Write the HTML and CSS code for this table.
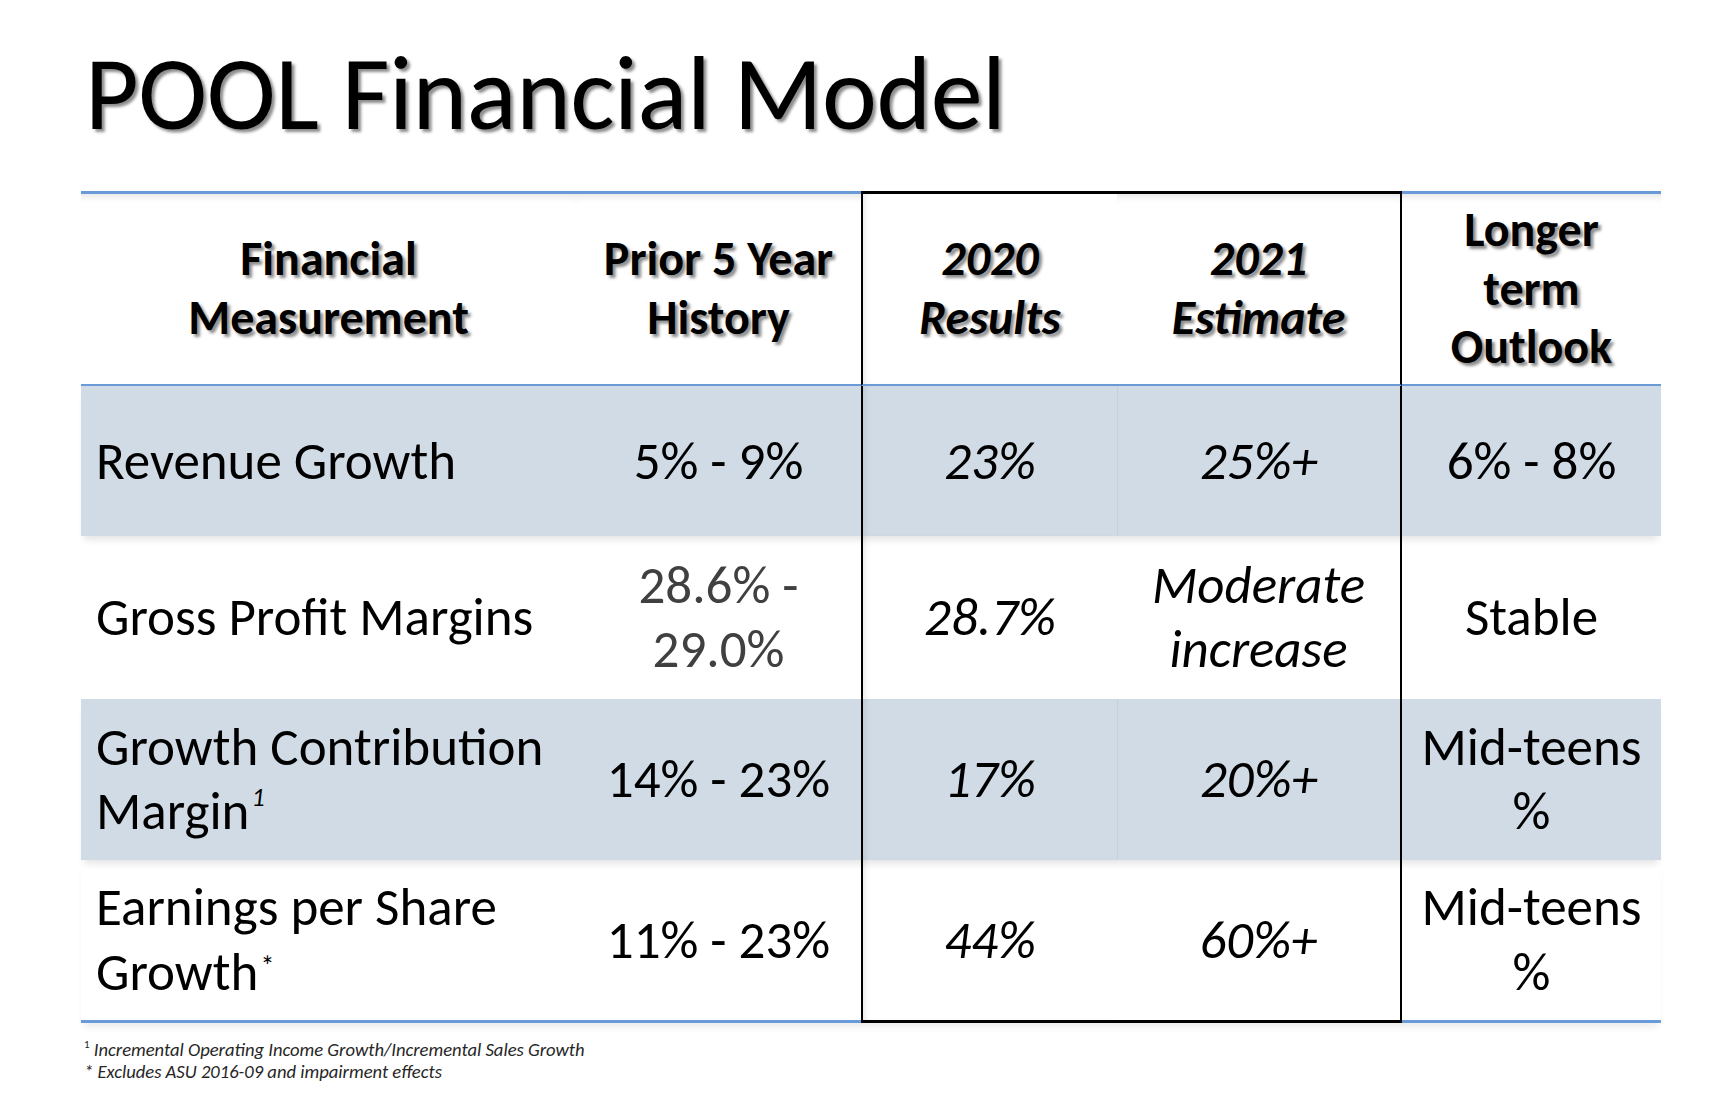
FILE: index.html
```html
<!DOCTYPE html>
<html lang="en">
<head>
<meta charset="utf-8">
<title>POOL Financial Model</title>
<link rel="stylesheet" href="styles.css">
</head>
<body>
<div class="slide">
  <h1 class="title">POOL Financial Model</h1>
  <div class="table">
    <div class="row head">
      <div class="cell hd"><span>Financial<br>Measurement</span></div>
      <div class="cell hd"><span>Prior 5 Year<br>History</span></div>
      <div class="cell hd box-l box-t it"><span>2020<br>Results</span></div>
      <div class="cell hd box-r box-t it"><span>2021<br>Estimate</span></div>
      <div class="cell hd"><span>Longer<br>term<br>Outlook</span></div>
    </div>

    <div class="row shade r1">
      <div class="cell first"><span>Revenue Growth</span></div>
      <div class="cell"><span>5% - 9%</span></div>
      <div class="cell box-l it"><span>23%</span></div>
      <div class="cell box-r it div"><span>25%+</span></div>
      <div class="cell"><span>6% - 8%</span></div>
    </div>

    <div class="row r2">
      <div class="cell first"><span>Gross Profit Margins</span></div>
      <div class="cell grey"><span>28.6% -<br>29.0%</span></div>
      <div class="cell box-l it"><span>28.7%</span></div>
      <div class="cell box-r it"><span>Moderate<br>increase</span></div>
      <div class="cell"><span>Stable</span></div>
    </div>

    <div class="row shade r3">
      <div class="cell first"><span>Growth Contribution<br>Margin<sup class="sup it">1</sup></span></div>
      <div class="cell"><span>14% - 23%</span></div>
      <div class="cell box-l it"><span>17%</span></div>
      <div class="cell box-r it div"><span>20%+</span></div>
      <div class="cell"><span>Mid-teens<br>%</span></div>
    </div>

    <div class="row r4 foot">
      <div class="cell first"><span>Earnings per Share<br>Growth<sup class="sup star">*</sup></span></div>
      <div class="cell"><span>11% - 23%</span></div>
      <div class="cell box-l box-b it"><span>44%</span></div>
      <div class="cell box-r box-b it"><span>60%+</span></div>
      <div class="cell"><span>Mid-teens<br>%</span></div>
    </div>
  </div>
  <div class="notes">
    <p class="note"><sup class="nsup">1</sup> Incremental Operating Income Growth/Incremental Sales Growth</p>
    <p class="note">* Excludes ASU 2016-09 and impairment effects</p>
  </div>
</div>
</body>
</html>
```

FILE: styles.css
```css
html, body {
  margin: 0;
  padding: 0;
  background: #ffffff;
}

body {
  font-family: "Carlito", "Noto Sans", "Open Sans", sans-serif;
  color: #000000;
}

.slide {
  width: 1736px;
  height: 1106px;
  box-sizing: border-box;
  padding: 31px 0 0 81px;
  overflow: hidden;
}

.title {
  margin: 0 0 33px 4px;
  font-size: 104px;
  font-weight: normal;
  line-height: 1.22;
  letter-spacing: -0.4px;
  text-shadow: 3px 3px 3px rgba(0, 0, 0, 0.45);
}

.table {
  display: flex;
  flex-direction: column;
  width: 1580px;
}

.row {
  display: grid;
  grid-template-columns: 495px 285px 256px 285px 259px;
  position: relative;
}

.head { height: 195px; }
.r1 { height: 150px; }
.r2 { height: 163px; }
.r3 { height: 161px; }
.r4 { height: 163px; }

.shade {
  background: #d0dbe6;
  box-shadow: 0 7px 7px -3px rgba(0, 0, 0, 0.10);
  z-index: 1;
}

.cell {
  box-sizing: border-box;
  display: flex;
  align-items: center;
  justify-content: center;
  text-align: center;
  font-size: 53px;
  line-height: 1.22;
  padding: 0 6px;
}

.hd {
  font-weight: bold;
  font-size: 48px;
  border-top: 3px solid #6a9ad8;
  border-bottom: 2px solid #6a9ad8;
  text-shadow: 3px 3px 3px rgba(0, 0, 0, 0.45);
  box-shadow: inset 0 8px 7px -5px rgba(0, 0, 0, 0.10);
}

.it {
  font-style: italic;
}

.div {
  border-left: 1px solid #c3d0df;
}

.first {
  justify-content: flex-start;
  text-align: left;
  padding-left: 15px;
}

.grey {
  color: #404040;
}

.foot .cell {
  border-bottom: 3px solid #6a9ad8;
}

.foot {
  box-shadow: 0 7px 7px -3px rgba(0, 0, 0, 0.08);
}

.box-l {
  border-left: 2px solid #000000;
  box-shadow: inset 6px 0 6px -4px rgba(0, 0, 0, 0.10);
}

.box-r {
  border-right: 2px solid #000000;
}

.hd.box-t {
  border-top: 3px solid #000000;
}

.foot .box-b {
  border-bottom: 3px solid #000000;
}

.sup {
  font-size: 26px;
  line-height: 0;
  vertical-align: 0.9em;
  margin-left: 2px;
}

.star {
  font-style: normal;
  font-size: 28px;
  vertical-align: 0.5em;
}

.notes {
  margin: 16px 0 0 3px;
}

.note {
  margin: 0;
  font-size: 18.6px;
  line-height: 22px;
  font-style: italic;
  color: #262626;
}

.nsup {
  font-size: 11px;
  line-height: 0;
  vertical-align: 0.7em;
  font-style: normal;
}
```
